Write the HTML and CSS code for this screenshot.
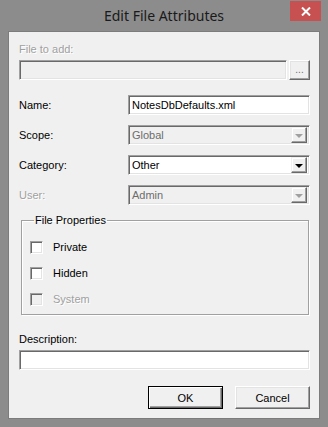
FILE: index.html
```html
<!DOCTYPE html>
<html>
<head>
<meta charset="utf-8">
<link rel="stylesheet" href="styles.css">
</head>
<body>
<div class="window">
  <div class="titlebar">
    <span class="title">Edit File Attributes</span>
    <div class="close">
      <svg width="10" height="9" viewBox="0 0 10 9"><path d="M1 0.5 L9 8.5 M9 0.5 L1 8.5" stroke="#fff" stroke-width="2"/></svg>
    </div>
  </div>
  <div class="client">
    <div class="label disabled">File to add:</div>
    <div class="file-row">
      <div class="edit edit-disabled"></div>
      <div class="btn browse">...</div>
    </div>
    <div class="rows">
      <div class="label">Name:</div>
      <div class="edit">NotesDbDefaults.xml</div>
      <div class="label">Scope:</div>
      <div class="edit edit-disabled combo"><span class="combo-text dim">Global</span><span class="drop"><span class="arrow arrow-dim"></span></span></div>
      <div class="label">Category:</div>
      <div class="edit combo"><span class="combo-text">Other</span><span class="drop"><span class="arrow"></span></span></div>
      <div class="label disabled">User:</div>
      <div class="edit edit-disabled combo"><span class="combo-text dim">Admin</span><span class="drop"><span class="arrow arrow-dim"></span></span></div>
    </div>
    <fieldset class="group">
      <legend class="legend">File Properties</legend>
      <div class="check"><span class="box"></span><span class="label">Private</span></div>
      <div class="check"><span class="box"></span><span class="label">Hidden</span></div>
      <div class="check"><span class="box box-disabled"></span><span class="label disabled">System</span></div>
    </fieldset>
    <div class="label desc-label">Description:</div>
    <div class="edit"></div>
    <div class="buttons">
      <div class="btn push default">OK</div>
      <div class="btn push">Cancel</div>
    </div>
  </div>
</div>
</body>
</html>
```
FILE: styles.css
```css
* { box-sizing: border-box; }
html, body { margin: 0; padding: 0; }
body { width: 328px; height: 427px; overflow: hidden; background: #8c8c8c; }

.window {
  position: relative;
  width: 328px;
  height: 427px;
  background: #8c8c8c;
  padding: 0 8px 8px 8px;
  display: flex;
  flex-direction: column;
  font-family: "Liberation Sans", Arial, sans-serif;
  font-size: 11px;
  color: #000;
}

.titlebar {
  height: 31px;
  display: flex;
  align-items: center;
  justify-content: center;
  flex: none;
}
.title {
  font-family: "Noto Sans", "Open Sans", sans-serif;
  font-size: 14px;
  color: #1a1a1a;
  margin-top: -1px;
}
.close {
  position: absolute;
  top: 1px;
  right: 7px;
  width: 31px;
  height: 20px;
  background: #c75050;
  display: flex;
  align-items: center;
  justify-content: center;
}
.close svg { display: block; }

.client {
  flex: 1;
  background: #f0f0f0;
  border: 1px solid #7c7c7c;
  padding: 11px 9px 0 10px;
  display: flex;
  flex-direction: column;
}

.label { line-height: 13px; white-space: nowrap; }
.disabled { color: #a0a0a0; text-shadow: 1px 1px 0 #fff; }

.file-row {
  display: flex;
  gap: 2px;
  margin-top: 4px;
}
.file-row .edit { flex: 1; }

.edit {
  height: 20px;
  background: #fff;
  border-style: solid;
  border-width: 1px;
  border-color: #a0a0a0 #fff #fff #a0a0a0;
  box-shadow: inset 1px 1px 0 #696969, inset -1px -1px 0 #e3e3e3;
  padding: 0 3px;
  line-height: 18px;
  white-space: nowrap;
  overflow: hidden;
}
.edit-disabled { background: #f0f0f0; }

.btn {
  background: #f0f0f0;
  border-style: solid;
  border-width: 1px;
  border-color: #fff #696969 #696969 #fff;
  box-shadow: inset -1px -1px 0 #a0a0a0, inset 1px 1px 0 #e3e3e3;
  display: flex;
  align-items: center;
  justify-content: center;
}
.browse {
  width: 21px;
  height: 20px;
  color: #6d6d6d;
  font-size: 10px;
  letter-spacing: 0;
  padding-bottom: 2px;
}

.rows {
  margin-top: 15px;
  display: grid;
  grid-template-columns: 109px 1fr;
  row-gap: 10px;
  align-items: center;
}
.rows .label { padding-top: 1px; }

.combo {
  display: flex;
  align-items: center;
  padding: 0 2px 0 3px;
}
.combo-text { flex: 1; }
.dim { color: #6d6d6d; }
.drop {
  width: 16px;
  height: 16px;
  background: #f0f0f0;
  border-style: solid;
  border-width: 1px;
  border-color: #f0f0f0 #696969 #696969 #f0f0f0;
  box-shadow: inset -1px -1px 0 #a0a0a0, inset 1px 1px 0 #fff;
  display: flex;
  align-items: center;
  justify-content: center;
}
.arrow {
  width: 0;
  height: 0;
  border-left: 4px solid transparent;
  border-right: 4px solid transparent;
  border-top: 4px solid #000;
  margin-top: 1px;
}
.arrow-dim { border-top-color: #a0a0a0; }

.group {
  margin: 9px 1px 0 2px;
  padding: 14px 0 8px 8px;
  border: 1px solid #a0a0a0;
  box-shadow: 1px 1px 0 #fff, inset 1px 1px 0 #fff;
  min-width: 0;
  display: flex;
  flex-direction: column;
  gap: 13px;
}
.legend {
  padding: 0 1px;
  margin-left: 4px;
  line-height: 13px;
}
.check {
  display: flex;
  align-items: center;
  gap: 10px;
  height: 13px;
}
.box {
  width: 13px;
  height: 13px;
  background: #fff;
  border-style: solid;
  border-width: 1px;
  border-color: #a0a0a0 #fff #fff #a0a0a0;
  box-shadow: inset 1px 1px 0 #696969, inset -1px -1px 0 #e3e3e3;
}
.box-disabled { background: #f0f0f0; }

.desc-label { margin-top: 18px; margin-bottom: 4px; }

.buttons {
  margin-top: 16px;
  display: flex;
  justify-content: flex-end;
  gap: 12px;
}
.push {
  width: 75px;
  height: 23px;
}
.default {
  border: 1px solid #000;
  box-shadow: inset 1px 1px 0 #fff, inset -1px -1px 0 #696969, inset -2px -2px 0 #a0a0a0;
}
```
